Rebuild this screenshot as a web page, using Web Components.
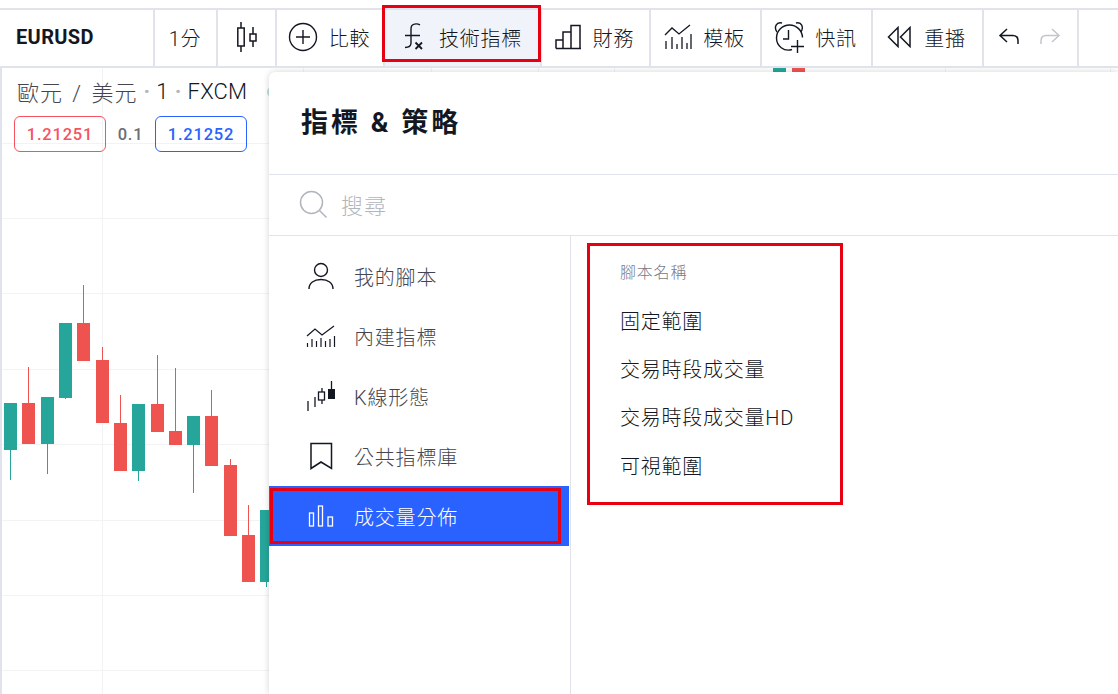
<!DOCTYPE html>
<html>
  <head>
    <meta charset="UTF-8" />
    <title>EURUSD</title>
    <style>
      html, body { margin: 0; height: 100%; background: #fff; overflow: hidden; }
      body { font-family: Roboto, "Noto Sans CJK TC", sans-serif; color: #131722; }
      tv-app { height: 694px; }
    </style>
  </head>

  <body>
    <tv-app>
      <tv-toolbar slot="toolbar">
        <tv-symbol w="153">EURUSD</tv-symbol>
        <tv-tool w="63" style="padding-right:1px">1分</tv-tool>
        <tv-tool w="59" style="padding-right:0">
          <svg slot="icon" width="24" height="32" viewBox="0 0 24 32" fill="none" stroke="#131722" stroke-width="1.5"><path d="M6 1v6M6 25v6M18 6v7M18 20v6"/><rect x="2.8" y="7" width="6.4" height="18"/><rect x="15" y="13" width="6" height="7"/></svg>
        </tv-tool>
        <tv-tool w="108" gap="11">
          <svg slot="icon" width="30" height="30" viewBox="0 0 30 30" fill="none" stroke="#131722" stroke-width="1.4"><circle cx="15" cy="15" r="13.5"/><path d="M15 8v14M8 15h14"/></svg>
          比較
        </tv-tool>
        <tv-tool w="157" gap="14" active>
          <svg slot="icon" width="24" height="30" viewBox="0 0 24 30" fill="none" stroke="#131722" stroke-width="1.4"><path d="M19 2.800c-3-1.500-9-1.500-9 4V21c0 3-2 4.500-6 4.500M4 13.500h15"/><path d="M14.500 20.500l6.500 6.500M21 20.500L14.500 27" stroke-width="1.800"/></svg>
          技術指標
        </tv-tool>
        <tv-tool w="109" gap="11">
          <svg slot="icon" width="27" height="26" viewBox="0 0 27 26" fill="none" stroke="#131722" stroke-width="1.5"><path d="M1 24.500h25M1 24.500V16h7v8.500M8 24.500V8h8v16.500M16 24.500V1.500h9v23"/></svg>
          財務
        </tv-tool>
        <tv-tool w="111" gap="11">
          <svg slot="icon" width="28" height="26" viewBox="0 0 28 26" fill="none" stroke="#131722" stroke-width="1.3"><path d="M1 11l7-7 7 6 11-9M2 25v-8M8 25v-12M13 25v-5M18 25v-12M23 25v-6M27 25v-15"/></svg>
          模板
        </tv-tool>
        <tv-tool w="111" gap="10">
          <svg slot="icon" width="31" height="33" viewBox="0 0 31 33" fill="none" stroke="#131722" stroke-width="1.4"><path d="M3 11C-.5 6 2.500.5 8 2M22 2c5.500-1.500 8 4 5 9"/><path d="M18 28.500C10 31 2.500 25 2.500 17c0-7.200 5.800-13 13-13 7 0 12.800 5.500 13 12.500"/><path d="M14.500 9v9H9M23.500 19v13M17 25.500h13"/></svg>
          快訊
        </tv-tool>
        <tv-tool w="111" gap="13">
          <svg slot="icon" width="24" height="22" viewBox="0 0 24 22" fill="none" stroke="#131722" stroke-width="1.5"><path d="M11 1.500L1.500 11l9.500 9.500zM23 1.500L13.500 11l9.500 9.500z"/></svg>
          重播
        </tv-tool>
        <tv-tool w="95" gap="19" style="padding-right:3px">
          <svg slot="icon" width="22" height="20" viewBox="0 0 22 20" fill="none" stroke="#131722" stroke-width="1.500"><path d="M9 2L2 8.500 9 15M2 8.500h13c3.500 0 5 2.500 5 5.500v3"/></svg>
          <svg slot="icon" width="22" height="20" viewBox="0 0 22 20" fill="none" stroke="#c3c5cb" stroke-width="1.500"><path d="M13 2l7 6.500L13 15M20 8.500H7c-3.500 0-5 2.500-5 5.500v3"/></svg>
        </tv-tool>
        <tv-annotation style="left:382px;top:-5px;width:153px;height:51px"></tv-annotation>
      </tv-toolbar>

      <tv-chart slot="chart"></tv-chart>

      <tv-legend slot="chart"></tv-legend>

      <tv-dialog slot="chart" heading="指標 &amp; 策略">
        <tv-nav-item slot="nav" label="我的腳本">
          <svg slot="icon" width="28" height="28" viewBox="0 0 28 28" fill="none" stroke="#131722" stroke-width="1.4"><circle cx="14" cy="8" r="6.500"/><path d="M2 27c0-6 5-9.500 12-9.500S26 21 26 27"/></svg>
        </tv-nav-item>
        <tv-nav-item slot="nav" label="內建指標">
          <svg slot="icon" width="30" height="24" viewBox="0 0 30 24" fill="none" stroke="#131722" stroke-width="1.2"><path d="M1 12l8-7 7 6 12-9M1.500 23v-4M6 23v-8M10.500 23v-6M15 23v-9M19.500 23v-6M24 23v-8M28.500 23v-11"/></svg>
        </tv-nav-item>
        <tv-nav-item slot="nav" label="K線形態">
          <svg slot="icon" width="30" height="32" viewBox="0 0 30 32" fill="none" stroke="#131722" stroke-width="1.300"><path d="M2 31v-10M9 27v-10M16 24v-4M16 12V8"/><rect x="12.500" y="12" width="6" height="8"/><rect x="22" y="9" width="7" height="10" fill="#131722" stroke="none"/><path d="M25.500 1v8M25.500 19v0"/></svg>
        </tv-nav-item>
        <tv-nav-item slot="nav" label="公共指標庫">
          <svg slot="icon" width="24" height="28" viewBox="0 0 24 28" fill="none" stroke="#131722" stroke-width="1.500"><path d="M2 1.500h20.500v25L12 20 2 26.500z"/></svg>
        </tv-nav-item>
        <tv-nav-item slot="nav" label="成交量分佈" active>
          <svg slot="icon" width="26" height="22" viewBox="0 0 26 22" fill="none" stroke="#fff" stroke-width="1.300"><rect x="1.500" y="8" width="4" height="13"/><rect x="10.500" y="1" width="4" height="20"/><rect x="20" y="12" width="4.500" height="9"/></svg>
        </tv-nav-item>

        <tv-script-list slot="list" heading="腳本名稱">
          <tv-script-item>固定範圍</tv-script-item>
          <tv-script-item>交易時段成交量</tv-script-item>
          <tv-script-item>交易時段成交量HD</tv-script-item>
          <tv-script-item>可視範圍</tv-script-item>
        </tv-script-list>
      </tv-dialog>
    </tv-app>

    <script>
      const FONT = 'Roboto, "Noto Sans CJK TC", sans-serif';

      // small helper so every class below stays short
      class Base extends HTMLElement {
        render(html) {
          if (!this.shadowRoot) this.attachShadow({ mode: "open" });
          this.shadowRoot.innerHTML = html;
        }
      }

      class TvApp extends Base {
        connectedCallback() {
          this.render(`
            <style>
              :host { display: flex; flex-direction: column; padding-top: 8px; box-sizing: border-box; }
              main { flex: 1; position: relative; overflow: hidden; border-left: 2px solid #e0e3eb; }
            </style>
            <slot name="toolbar"></slot>
            <main><slot name="chart"></slot></main>`);
        }
      }

      class TvToolbar extends Base {
        connectedCallback() {
          this.render(`
            <style>
              :host {
                display: flex; position: relative; height: 60px; box-sizing: border-box; flex: none;
                border-top: 2px solid #e0e3eb; border-bottom: 2px solid #e0e3eb; padding-left: 2px;
              }
            </style>
            <slot></slot>`);
        }
      }

      class TvSymbol extends Base {
        connectedCallback() {
          this.render(`
            <style>
              :host {
                display: flex; align-items: center; box-sizing: border-box; width: ${this.getAttribute("w")}px;
                padding: 0 0 2px 14px; border-right: 2px solid #e0e3eb;
                font: 700 20px ${FONT}; letter-spacing: .35px; color: #131722;
              }
            </style>
            <slot></slot>`);
        }
      }

      class TvTool extends Base {
        connectedCallback() {
          const gap = this.getAttribute("gap") || 0;
          this.render(`
            <style>
              :host {
                display: flex; align-items: center; justify-content: center; box-sizing: border-box;
                width: ${this.getAttribute("w")}px; flex: none; gap: ${gap}px; padding: 0 2px 2px 0;
                border-right: 2px solid #e0e3eb;
                font: 300 20px ${FONT}; letter-spacing: .7px; color: #131722; white-space: nowrap;
              }
              :host([active]) { background: #f0f3fa; }
              span { display: flex; align-items: center; gap: ${gap}px; }
            </style>
            <span><slot name="icon"></slot></span><slot></slot>`);
        }
      }

      class TvAnnotation extends Base {
        connectedCallback() {
          this.render(`<style>:host { display: block; position: absolute; border: 3px solid #e60012; pointer-events: none; }</style>`);
        }
      }

      class TvChart extends Base {
        connectedCallback() {
          // [x, bodyTop, bodyBottom, wickEnd, up]
          const candles = [
            [4, 403, 450, 480, 1], [22, 403, 444, 367, 0], [41, 397, 444, 474, 1], [59, 323, 398, 399, 1],
            [77, 323, 361, 285, 0], [96, 360, 423, 347, 0], [114, 423, 471, 395, 0], [132, 404, 471, 481, 1],
            [151, 404, 432, 355, 0], [169, 431, 445, 368, 0], [187, 416, 445, 493, 1], [205, 416, 466, 390, 0],
            [224, 465, 536, 459, 0], [242, 535, 582, 505, 0], [260, 510, 582, 587, 1],
          ];
          const top = 68;
          let s = "";
          for (const y of [143, 218, 293, 369, 444, 520, 595, 670])
            s += `<path d="M0 ${y - top + .5}H1118" stroke="#f2f3f5"/>`;
          for (const x of [102, 303, 431, 538, 614, 945, 1110])
            s += `<path d="M${x + .5} 0V640" stroke="#f2f3f5"/>`;
          for (const [x, a, b, w, up] of candles) {
            const c = up ? "#26a69a" : "#ef5350";
            s += `<rect x="${x + 6}" y="${Math.min(w, a) - top}" width="1" height="${Math.abs(up ? w - a : b - w)}" fill="${c}"/>`;
            s += `<rect x="${x}" y="${a - top}" width="13" height="${b - a}" fill="${c}"/>`;
          }
          s += `<rect x="773" y="0" width="13" height="6" fill="#26a69a"/><rect x="792" y="0" width="13" height="6" fill="#ef5350"/>`;
          s += `<circle cx="273" cy="24" r="6" fill="#b9e0da"/>`;
          this.render(`
            <style>
              :host { display: block; position: absolute; left: -2px; top: 0; }
              svg { display: block; }
            </style>
            <svg width="1118" height="626" viewBox="0 0 1118 626">${s}</svg>`);
        }
      }

      class TvLegend extends Base {
        connectedCallback() {
          this.render(`
            <style>
              :host {
                display: block; position: absolute; left: 12px; top: 7px;
                font: 300 22px ${FONT}; color: #131722; white-space: nowrap;
              }
              .title { display: flex; align-items: center; height: 32px; padding-left: 3px; letter-spacing: .2px; }
              .dot { color: #b2b5be; margin: 0 6px; font-weight: 700; }
              .t { color: #434651; letter-spacing: 1px; word-spacing: 3px; }
              .prices { display: flex; align-items: center; margin-top: 9px; font-size: 16.500px; font-weight: 500; letter-spacing: .8px; }
              .p { width: 92px; height: 36px; box-sizing: border-box; border: 1px solid; border-radius: 6px; display: flex; align-items: center; justify-content: center; }
              .sell { color: #f7525f; border-color: #f7525f; }
              .buy { color: #2962ff; border-color: #2962ff; }
              .s { width: 49px; text-align: center; color: #6a6d78; }
            </style>
            <div class="title"><span class="t">歐元 / 美元</span><span class="dot">·</span>1<span class="dot">·</span>FXCM</div>
            <div class="prices"><span class="p sell">1.21251</span><span class="s">0.1</span><span class="p buy">1.21252</span></div>`);
        }
      }

      class TvDialog extends Base {
        connectedCallback() {
          this.render(`
            <style>
              :host {
                display: flex; flex-direction: column; position: absolute; left: 267px; top: 4px; right: 0; bottom: 0;
                background: #fff; border-radius: 6px 0 0 0;
                box-shadow: 0 0 6px rgba(19, 23, 34, .18);
              }
              h2 {
                margin: 0; height: 103px; box-sizing: border-box; border-bottom: 1px solid #e0e3eb;
                display: flex; align-items: center; padding: 0 0 5px 32px;
                font: 700 27px ${FONT}; letter-spacing: 3px; color: #131722;
              }
              .search {
                height: 61px; box-sizing: border-box; border-bottom: 1px solid #e0e3eb;
                display: flex; align-items: center; gap: 14px; padding: 0 0 2px 30px;
                font: 300 22px ${FONT}; letter-spacing: 1px; color: #b2b5be;
              }
              .body { flex: 1; display: flex; min-height: 0; }
              nav {
                width: 302px; box-sizing: border-box; border-right: 1px solid #e0e3eb; padding: 10px 1px 0 0;
                display: flex; flex-direction: column;
              }
              section { flex: 1; padding: 7px 0 0 16px; }
            </style>
            <h2>${this.getAttribute("heading")}</h2>
            <div class="search">
              <svg width="28" height="28" viewBox="0 0 28 28" fill="none" stroke="#b2b5be" stroke-width="1.500"><circle cx="12.500" cy="12.500" r="11"/><path d="M20.500 20.500l7 7"/></svg>
              搜尋
            </div>
            <div class="body">
              <nav><slot name="nav"></slot></nav>
              <section><slot name="list"></slot></section>
            </div>`);
        }
      }

      class TvNavItem extends Base {
        connectedCallback() {
          this.render(`
            <style>
              :host {
                display: flex; align-items: center; position: relative; height: 60px; flex: none;
                font: 300 20px ${FONT}; letter-spacing: .8px; color: #434651;
              }
              :host([active]) { background: #2962ff; color: #fff; }
              .i { width: 85px; display: flex; justify-content: center; box-sizing: border-box; padding-left: 18px; }
              .mark { position: absolute; left: 1px; top: 2px; width: 285px; height: 50px; border: 3px solid #e60012; }
            </style>
            <span class="i"><slot name="icon"></slot></span>
            <span>${this.getAttribute("label")}</span>
            ${this.hasAttribute("active") ? '<span class="mark"></span>' : ""}`);
        }
      }

      class TvScriptList extends Base {
        connectedCallback() {
          this.render(`
            <style>
              :host {
                display: block; width: 256px; height: 262px; box-sizing: border-box;
                border: 3px solid #e60012; padding: 10px 0 0 30px;
              }
              div { height: 30px; display: flex; align-items: center; font: 300 16px ${FONT}; letter-spacing: .8px; color: #787b86; margin-bottom: 10px; }
            </style>
            <div>${this.getAttribute("heading")}</div>
            <slot></slot>`);
        }
      }

      class TvScriptItem extends Base {
        connectedCallback() {
          this.render(`
            <style>
              :host { display: flex; align-items: center; height: 48.300px; font: 300 20px ${FONT}; letter-spacing: .75px; color: #131722; white-space: nowrap; }
            </style>
            <slot></slot>`);
        }
      }

      customElements.define("tv-app", TvApp);
      customElements.define("tv-toolbar", TvToolbar);
      customElements.define("tv-symbol", TvSymbol);
      customElements.define("tv-tool", TvTool);
      customElements.define("tv-annotation", TvAnnotation);
      customElements.define("tv-chart", TvChart);
      customElements.define("tv-legend", TvLegend);
      customElements.define("tv-dialog", TvDialog);
      customElements.define("tv-nav-item", TvNavItem);
      customElements.define("tv-script-list", TvScriptList);
      customElements.define("tv-script-item", TvScriptItem);
    </script>
  </body>
</html>
